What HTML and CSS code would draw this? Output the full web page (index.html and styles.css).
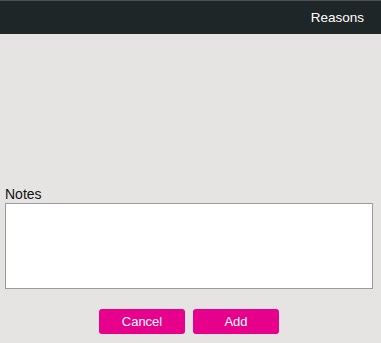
FILE: index.html
```html
<!DOCTYPE html>
<html lang="en">
<head>
  <meta charset="UTF-8">
  <meta name="viewport" content="width=device-width, initial-scale=1.0">
  <title>Reasons</title>
  <link rel="stylesheet" href="styles.css">
</head>
<body>
  <div class="header">
    <span class="header-title">Reasons</span>
  </div>

  <!-- Notas -->
  <div class="content">
    <label class="notes-label" for="notes">Notes</label>
    <textarea id="notes" class="notes"></textarea>

    <div class="actions">
      <button class="action-button">Cancel</button>
      <button class="action-button">Add</button>
    </div>
  </div>
</body>
</html>
```

FILE: styles.css
```css
/* General */
html, body {
  height: 100%;
}

body {
  font-family: "Liberation Sans", Arial, sans-serif;
  background-color: #e5e4e2;
  margin: 0;
  padding: 0;
  display: flex;
  flex-direction: column;
}

/* Barra superior */
.header {
  height: 34px;
  background-color: #1f2628;
  border-top: 1px solid #4a5052;
  box-sizing: border-box;
  display: flex;
  align-items: center;
  justify-content: flex-end;
  padding-right: 17px;
}

.header-title {
  color: #ffffff;
  font-size: 13.5px;
}

/* Contenido */
.content {
  flex: 1;
  display: flex;
  flex-direction: column;
  justify-content: flex-end;
  padding: 0 8px 9px 5px;
}

.notes-label {
  font-size: 14px;
  line-height: 16px;
  color: #111;
  margin-bottom: 1px;
}

.notes {
  height: 86px;
  box-sizing: border-box;
  border: 1px solid #9a9a9a;
  background-color: #ffffff;
  resize: none;
  margin: 0;
  padding: 2px;
  font-family: inherit;
}

/* Botones */
.actions {
  display: flex;
  justify-content: center;
  gap: 8px;
  margin-top: 20px;
}

.action-button {
  width: 86px;
  height: 25px;
  background-color: #e6008c;
  color: #ffffff;
  border: none;
  border-radius: 3px;
  font-family: inherit;
  font-size: 13px;
  cursor: pointer;
}
```
